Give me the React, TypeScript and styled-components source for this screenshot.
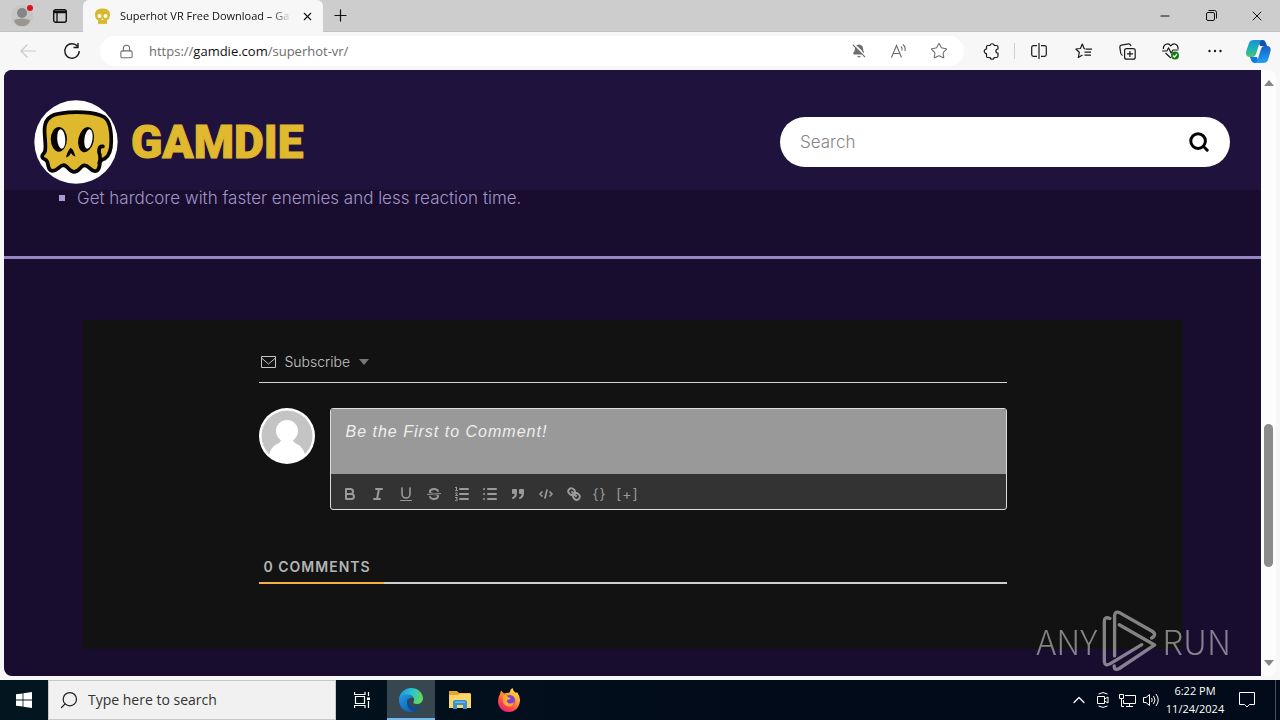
import React from "react";
import styled, { createGlobalStyle } from "styled-components";
import {
  BellOff,
  ChevronUp,
  Lock,
  Minus,
  Plus,
  Search,
  Star,
  X,
} from "lucide-react";

const GlobalStyle = createGlobalStyle`
  * { box-sizing: border-box; }
  body { margin: 0; font-family: "Open Sans", "Noto Sans", sans-serif; }
  button { border: 0; padding: 0; background: none; color: inherit; font: inherit; cursor: pointer; }
  svg { display: block; flex: none; }
`;

const Desktop = styled.div`
  display: flex;
  flex-direction: column;
  min-height: 100vh;
  background: #f7f7f7;
`;

/* ---------- browser chrome ---------- */

const TitleBar = styled.header`
  display: flex;
  height: 32px;
  background: #cdcdcd;
  border-bottom: 1px solid #c2c2c2;
  color: #111;
`;

const TitleLeft = styled.div`
  display: flex;
  align-items: center;
  gap: 20px;
  width: 83px;
  padding-left: 11px;
`;

const ProfileButton = styled.button`
  position: relative;
  width: 22px;
  height: 24px;
`;

const AlertDot = styled.span`
  position: absolute;
  top: 1px;
  right: 0;
  width: 6px;
  height: 6px;
  border-radius: 50%;
  background: #e0101c;
`;

const Tab = styled.div`
  display: flex;
  align-items: center;
  gap: 9px;
  width: 240px;
  height: 32px;
  padding: 0 9px 0 11px;
  border-radius: 6px 6px 0 0;
  background: #f7f7f7;
`;

const TabTitle = styled.span`
  flex: 1;
  font-size: 11px;
  line-height: 16px;
  white-space: nowrap;
  mask-image: linear-gradient(90deg, #000 88%, transparent);
`;

const ChromeButton = styled.button<{ $w?: number }>`
  display: flex;
  align-items: center;
  justify-content: center;
  width: ${(p) => p.$w ?? 34}px;
`;

const WindowControls = styled.div`
  display: flex;
  margin-left: auto;
`;

const NavBar = styled.nav`
  display: flex;
  align-items: center;
  height: 38px;
  padding-left: 6px;
  background: #f7f7f7;
  color: #1a1a1a;
`;

const AddressBar = styled.div`
  display: flex;
  flex: 1;
  align-items: center;
  height: 30px;
  margin: 0 8px 0 6px;
  padding: 0 5px 0 19px;
  border-radius: 15px;
  background: #fff;
  color: #6c6c6c;
`;

const Url = styled.div`
  flex: 1;
  margin-left: 15px;
  font-size: 13px;
  line-height: 20px;
  white-space: nowrap;
  outline: none;
  b { font-weight: 400; color: #111; }
`;

const Divider = styled.span`
  width: 1px;
  height: 16px;
  margin: 0 2px;
  background: #cfcfcf;
`;

/* ---------- page ---------- */

const Viewport = styled.div`
  display: flex;
  flex: 1;
  margin: 0 4px 4px;
  overflow: hidden;
  border-radius: 8px;
  background: #fcfcfc;
`;

const Site = styled.main`
  flex: 1;
  background: #190d2f;
  font-family: Inter, "Open Sans", sans-serif;
`;

const SiteHeader = styled.div`
  display: flex;
  align-items: center;
  justify-content: space-between;
  height: 120px;
  padding: 0 31px 0 30px;
  background: #1f133d;
`;

const Brand = styled.a`
  display: flex;
  align-items: center;
  gap: 13px;
  padding-top: 24px;
  color: #e0b92e;
  font-family: Roboto, sans-serif;
  font-size: 46px;
  font-weight: 900;
  line-height: 84px;
  text-decoration: none;
  -webkit-text-stroke: 1px #e0b92e;
`;

const SearchForm = styled.form`
  display: flex;
  align-items: center;
  width: 450px;
  height: 50px;
  margin-top: 24px;
  padding: 0 20px;
  border-radius: 25px;
  background: #fff;
  color: #000;
`;

const SearchInput = styled.input`
  flex: 1;
  min-width: 0;
  padding: 0;
  border: 0;
  outline: 0;
  background: none;
  font: 300 17px/24px Inter, sans-serif;
  &::placeholder { color: #858585; opacity: 1; }
`;

const Features = styled.ul`
  margin: 0;
  padding: 0 0 50px 55px;
  border-bottom: 3px solid #9487c2;
  list-style: none;
  color: #a196ca;
  font-size: 17px;
  font-weight: 300;
  line-height: 16px;
`;

const Feature = styled.li`
  display: flex;
  align-items: center;
  gap: 12px;
  &::before {
    content: "";
    width: 6px;
    height: 6px;
    background: #a89cd0;
  }
`;

const Comments = styled.section`
  max-width: 1100px;
  margin: 61px auto 27px;
  padding: 30px 0 65px;
  background: #121212;
  color: #c4c4c4;
`;

const CommentsInner = styled.div`
  width: 68%;
  margin: 0 auto;
`;

const SubscribeRow = styled.div`
  display: flex;
  height: 33px;
  padding: 0 2px 9px;
  border-bottom: 1px solid #d5d5d5;
`;

const SubscribeButton = styled.button`
  display: flex;
  align-items: center;
  gap: 9px;
  font-size: 14px;
  font-weight: 300;
  svg:last-child { color: #777; }
`;

const Composer = styled.form`
  display: flex;
  align-items: flex-start;
  gap: 15px;
  margin: 25px 0 47px;
`;

const Editor = styled.div`
  flex: 1;
  overflow: hidden;
  border: 1px solid #dcdcdc;
  border-radius: 3px;
  background: #333;
`;

const CommentBox = styled.textarea`
  display: block;
  width: 100%;
  height: 65px;
  padding: 11px 15px;
  border: 0;
  outline: 0;
  resize: none;
  background: #999;
  font: italic 400 16px/24px "Liberation Sans", Arial, sans-serif;
  letter-spacing: 1px;
  &::placeholder { color: #eee; opacity: 1; }
`;

const Tools = styled.div`
  display: flex;
  align-items: center;
  height: 35px;
  padding: 4px 0 0 5px;
  color: #9a9a9a;
`;

const Tool = styled.button`
  display: flex;
  align-items: center;
  justify-content: center;
  width: 28px;
  height: 24px;
`;

const TextTool = styled(Tool)<{ $w: number }>`
  width: ${(p) => p.$w}px;
  font-size: 14px;
  letter-spacing: 1px;
  line-height: 16px;
`;

const CountRow = styled.div`
  display: flex;
  border-bottom: 2px solid #cfcfcf;
`;

const Count = styled.h2`
  width: 125px;
  margin: 0 0 -2px;
  padding: 0 5px 5px;
  border-bottom: 2px solid #f5b041;
  color: #b5b5b5;
  font-size: 14px;
  font-weight: 600;
  letter-spacing: 1px;
  line-height: 20px;
  white-space: nowrap;
`;

const ScrollTrack = styled.div`
  display: flex;
  flex-direction: column;
  align-items: center;
  width: 15px;
  padding: 10px 0;
  color: #858585;
`;

const Spacer = styled.span<{ $grow: number }>`
  flex: ${(p) => p.$grow} 0 0;
`;

const Thumb = styled.span`
  flex: 143 0 0;
  width: 9px;
  border-radius: 5px;
  background: #8b8b8b;
`;

const Watermark = styled.div`
  position: absolute;
  right: 49px;
  bottom: 48px;
  display: flex;
  align-items: center;
  gap: 5px;
  color: #fff;
  font: 300 34px/62px "Noto Sans CJK SC", sans-serif;
  opacity: 0.48;
  pointer-events: none;
`;

/* ---------- taskbar ---------- */

const Taskbar = styled.footer`
  display: flex;
  height: 40px;
  background: linear-gradient(90deg, #03161f, #020b1a 60%);
  color: #fff;
`;

const TaskButton = styled.button<{ $w?: number; $active?: boolean }>`
  display: flex;
  align-items: center;
  justify-content: center;
  width: ${(p) => p.$w ?? 49}px;
  background: ${(p) => (p.$active ? "#37474f" : "transparent")};
  box-shadow: ${(p) => (p.$active ? "inset 0 -2px #76b9ed" : "none")};
`;

const TaskSearch = styled.label`
  display: flex;
  align-items: center;
  gap: 9px;
  width: 288px;
  padding: 0 10px;
  border: 1px solid #c8c8c8;
  background: #f1f1f1;
  color: #222;
`;

const TaskSearchInput = styled.input`
  flex: 1;
  min-width: 0;
  padding: 0;
  border: 0;
  outline: 0;
  background: none;
  font: 14px/20px "Open Sans", sans-serif;
  &::placeholder { color: #333; opacity: 1; }
`;

const Tray = styled.div`
  display: flex;
  margin-left: auto;
`;

const Clock = styled.time`
  display: flex;
  flex-direction: column;
  align-items: center;
  justify-content: center;
  width: 64px;
  font-size: 11px;
  line-height: 18px;
`;

const ShowDesktop = styled.button`
  width: 5px;
  margin-left: 8px;
  border-left: 1px solid #4a5260;
`;

/* ---------- drawings ---------- */

const BrandSkull = () => (
  <svg width="84" height="84" viewBox="12 12 250 250" aria-hidden="true">
    <circle cx="137" cy="137" r="124" fill="#fff" />
    <g stroke="#080400" strokeWidth="11" strokeLinejoin="round" strokeLinecap="round">
      <path
        fill="#deb92d"
        d="M45 164C49 145 41 112 44 92C47 66 65 55 92 52C132 45 192 47 220 62C238 72 242 108 242 135C242 164 234 180 222 187Q209 190 208 200C207 219 200 227 187 222C177 216 168 202 157 208C148 213 145 226 131 226C118 226 112 207 100 206C87 207 82 224 66 223C53 221 56 207 51 195C48 187 36 188 36 180C36 173 43 172 45 164Z"
      />
      <path fill="none" d="M217 150C205 148 203 162 208 176Q211 188 206 200" />
    </g>
    <ellipse cx="86" cy="129" rx="24" ry="37" fill="#080400" />
    <ellipse cx="93" cy="128" rx="12" ry="29" fill="#fff" transform="rotate(-4 93 128)" />
    <ellipse cx="167" cy="130" rx="23" ry="38" fill="#080400" transform="rotate(12 167 130)" />
    <ellipse cx="174" cy="128" rx="12" ry="29" fill="#fff" transform="rotate(8 174 128)" />
    <path d="M107 183Q112 163 121 154Q131 160 135 181Q126 178 122 170Q115 183 107 183Z" fill="#080400" />
  </svg>
);

const Favicon = () => (
  <svg width="17" height="17" viewBox="0 0 17 17" aria-hidden="true">
    <path fill="#d9b92c" d="M1 6.500C1 2.500 4 .5 8.500 .5S16 2.500 16 6.500C16 10 14.500 12 13 12V15.500Q12 17 11 15.500Q10 17 8.500 15.500Q7 17 6 15.500Q5 17 4 15.500V12C2.500 12 1 10 1 6.500Z" />
    <circle cx="5.500" cy="8" r="2" fill="#fff" />
    <circle cx="11.500" cy="8" r="2" fill="#fff" />
    <path fill="#fff" d="M8.500 10l1 2h-2z" />
  </svg>
);

const Person = () => (
  <svg width="22" height="24" viewBox="0 0 22 24" aria-hidden="true">
    <circle cx="11" cy="12" r="11" fill="#c6c6c6" />
    <circle cx="11" cy="9" r="5" fill="#868686" />
    <path fill="#9b948f" d="M3 16Q11 13 19 16Q18 22 11 22T3 16Z" />
  </svg>
);

const Panel = () => (
  <svg width="14" height="14" viewBox="0 0 14 14" fill="none" stroke="currentColor" aria-hidden="true">
    <rect x=".7" y=".7" width="12.600" height="12.600" rx="2" strokeWidth="1.400" />
    <path d="M1 3h12" strokeWidth="2.500" />
    <path d="M4 3v10" strokeWidth="1.300" />
  </svg>
);

const Back = () => (
  <svg width="18" height="16" viewBox="0 0 18 16" fill="none" stroke="#c9c9c9" strokeWidth="1.200" aria-hidden="true">
    <path d="M17 8H2M8.500 1.500L2 8l6.500 6.500" />
  </svg>
);

const Reload = () => (
  <svg width="18" height="18" viewBox="0 0 18 18" fill="none" stroke="currentColor" strokeWidth="1.400" aria-hidden="true">
    <path d="M16.200 9A7.200 7.200 0 1 1 14.500 4.300M15 1v4.500h-4.500" />
  </svg>
);

const Restore = () => (
  <svg width="11" height="11" viewBox="0 0 11 11" fill="none" stroke="currentColor" aria-hidden="true">
    <rect x=".5" y="2.500" width="8" height="8" rx="1.500" />
    <path d="M2.500 .5H8.500Q10.500 .5 10.500 2.500V8.500" />
  </svg>
);

const ReadAloud = () => (
  <svg width="18" height="16" viewBox="0 0 18 16" fill="none" stroke="currentColor" strokeWidth="1.100" aria-hidden="true">
    <path d="M1.500 14.500L6.500 2.500l5 12M3.200 10.500h6.600M11 3.500q1.500 1.500 1 4M13 1.500q2.800 2.500 2 6.500" />
  </svg>
);

const PuzzleIcon = () => (
  <svg width="18" height="18" viewBox="0 0 18 18" fill="none" stroke="currentColor" strokeWidth="1.200" strokeLinejoin="round" aria-hidden="true">
    <path d="M4.500 3.500H7A2.200 2.200 0 0 1 11.300 3.500H13.500Q15 3.500 15 5V7A2.100 2.100 0 0 0 15 11.200V14Q15 15.500 13.500 15.500H11.300A2.200 2.200 0 0 1 7 15.500H4.500Q3.500 15.500 3.500 14V11.500A2.200 2.200 0 1 1 3.500 7V5Q3.500 3.500 4.500 3.500Z" />
  </svg>
);

const Split = () => (
  <svg width="16" height="16" viewBox="0 0 16 16" fill="none" stroke="currentColor" strokeWidth="1.200" aria-hidden="true">
    <path d="M6 2.600H2.500Q.7 2.600.7 4.400V11.600Q.7 13.400 2.500 13.400H6M10 2.600H13.500Q15.300 2.600 15.300 4.400V11.600Q15.300 13.400 13.500 13.400H10M8 0V16" />
  </svg>
);

const Favorites = () => (
  <svg width="17" height="16" viewBox="0 0 17 16" fill="none" stroke="currentColor" strokeWidth="1.200" strokeLinejoin="round" aria-hidden="true">
    <path d="M10.500 6L9.200 5.700L7.300 1L5.400 5.500L.8 6L4.300 9.300L3.300 14.500L7.500 12M11 6.200H17M9.500 9.200H16M9.500 12.200H16" />
  </svg>
);

const Collections = () => (
  <svg width="17" height="17" viewBox="0 0 17 17" fill="none" stroke="currentColor" strokeWidth="1.200" aria-hidden="true">
    <rect x="5.600" y="5.600" width="10.600" height="10.600" rx="2" />
    <path d="M10.900 8v6M8 10.900h6M3.500 12.500Q2 11.500 1.700 10L.8 4.200Q.8 2.500 2.400 2.200L9.500 .9Q11.500 .8 12 3.200" />
  </svg>
);

const Health = () => (
  <svg width="18" height="17" viewBox="0 0 18 17" fill="none" stroke="currentColor" strokeWidth="1.200" strokeLinejoin="round" aria-hidden="true">
    <path d="M1.500 6C.8 1 6.500-.8 8.800 3C11.500-.8 16.500 1 16 6M3.500 10L8.800 15M0 8H4.800L6.600 4.800L9 10L11 7H16.500" />
    <circle cx="13" cy="12.500" r="4" fill="#107c10" stroke="none" />
    <path d="M11 12.500l1.500 1.500 2.500-3" stroke="#fff" />
  </svg>
);

const Dots = () => (
  <svg width="14" height="4" viewBox="0 0 14 4" fill="currentColor" aria-hidden="true">
    <circle cx="1.500" cy="2" r="1.200" />
    <circle cx="7" cy="2" r="1.200" />
    <circle cx="12.500" cy="2" r="1.200" />
  </svg>
);

const Copilot = () => (
  <svg width="25" height="23" viewBox="0 0 25 23" aria-hidden="true">
    <defs>
      <linearGradient id="cpA" x1="0" y1="0" x2="0" y2="1">
        <stop offset="0" stopColor="#1b90d8" />
        <stop offset=".55" stopColor="#18b5b2" />
        <stop offset="1" stopColor="#58bf6a" />
      </linearGradient>
      <linearGradient id="cpB" x1="0" y1="0" x2="0" y2="1">
        <stop offset="0" stopColor="#1560c4" />
        <stop offset="1" stopColor="#25a0f5" />
      </linearGradient>
    </defs>
    <path fill="#1251ad" d="M12 0H17Q19 0 20 3L21 6H14Z" />
    <path fill="#0f7be0" d="M4 17H11L13 23H9Q6 23 5 20Z" />
    <path fill="url(#cpA)" d="M8 0H16Q14 1 13.500 3L10 14Q9 17 6 17H3Q-1 16 .3 11L3 3Q4 0 8 0Z" />
    <path fill="url(#cpB)" d="M18 6H21Q25.500 6.500 24.500 11L22 20Q21 23 17 23H9Q11 22 11.500 20L15 9Q16 6 18 6Z" />
  </svg>
);

const Triangle = ({ w, up }: { w: number; up?: boolean }) => (
  <svg width={w} height="6" viewBox="0 0 10 6" fill="currentColor" aria-hidden="true">
    <path d={up ? "M0 6L5 0L10 6Z" : "M0 0H10L5 6Z"} />
  </svg>
);

const Envelope = () => (
  <svg width="15" height="12" viewBox="0 0 15 12" fill="none" stroke="currentColor" aria-hidden="true">
    <path d="M.5 .5h14v11H.5zM.5 2l7 6 7-6" />
  </svg>
);

const Avatar = () => (
  <svg width="56" height="56" viewBox="0 0 56 56" aria-hidden="true">
    <defs>
      <clipPath id="avatarClip"><circle cx="28" cy="28" r="26" /></clipPath>
    </defs>
    <circle cx="28" cy="28" r="28" fill="#fff" />
    <circle cx="28" cy="28" r="25.500" fill="#c4c4c4" />
    <g fill="#fff" clipPath="url(#avatarClip)">
      <circle cx="28" cy="23" r="11" />
      <path d="M22 30H34Q33 34 38 36Q46 39 48 56H8Q10 39 18 36Q23 34 22 30Z" />
    </g>
  </svg>
);

const PlayMark = () => (
  <svg width="55" height="62" viewBox="238 14 166 186" fill="none" stroke="currentColor" strokeWidth="10" strokeLinecap="round" strokeLinejoin="round" aria-hidden="true">
    <path d="M262 39Q245 32 245 48V170Q247 184 262 176L358 118" />
    <path d="M276 152V30Q278 15 292 22L392 79Q403 90 388 98" />
    <path d="M290 58L397 119L290 190Q274 198 275 182" />
  </svg>
);

const Thin = ({ children }: { children: React.ReactNode }) => (
  <svg width="18" height="18" viewBox="0 0 18 18" fill="none" stroke="currentColor" strokeWidth="2" strokeLinecap="round" strokeLinejoin="round" aria-hidden="true">
    {children}
  </svg>
);

const editorTools: { label: string; art: React.ReactNode }[] = [
  {
    label: "Bold",
    art: <path d="M5 4H9.500A2.500 2.500 0 0 1 9.500 9H5ZM5 9H10.500A2.500 2.500 0 0 1 10.500 14H5Z" />,
  },
  { label: "Italic", art: <path d="M7 4h6M5 14h6M8 14l2-10" /> },
  {
    label: "Underline",
    art: (
      <>
        <path d="M5 3V9a4 4 0 0 0 8 0V3" strokeWidth="1.600" />
        <path d="M3.500 15.500h11" strokeWidth="1" />
      </>
    ),
  },
  {
    label: "Strike",
    art: (
      <>
        <path d="M15.500 8.500L2.500 9.500" strokeWidth="1" />
        <path
          fill="currentColor"
          stroke="none"
          d="M9.007 8C6.542 7.791 6 7.519 6 6.500 6 5.792 7.283 5 9 5c1.571 0 2.765.679 2.969 1.309a1 1 0 0 0 1.900-.617C13.356 4.106 11.354 3 9 3 6.200 3 4 4.538 4 6.500a3.200 3.200 0 0 0 .5 1.843ZM8.984 10C11.457 10.208 12 10.479 12 11.500c0 .708-1.283 1.500-3 1.500-1.571 0-2.765-.679-2.969-1.309a1 1 0 1 0-1.900.617C4.644 13.894 6.646 15 9 15c2.800 0 5-1.538 5-3.500a3.200 3.200 0 0 0-.5-1.843Z"
        />
      </>
    ),
  },
  {
    label: "Ordered list",
    art: (
      <>
        <path d="M7 4h8M7 9h8M7 14h8" />
        <path strokeWidth="1" d="M2.500 2.500l1-.5v3.500M2.500 5.500h2M2.500 8q2-1 1.800.6L2.500 10.500h2M2.500 12.500h1.800L3.300 14q1.400 0 1 1.300-.6.600-1.800.2" />
      </>
    ),
  },
  { label: "Bullet list", art: <path d="M7 4h8M7 9h8M7 14h8M3 4h.01M3 9h.01M3 14h.01" /> },
  {
    label: "Quote",
    art: (
      <path
        fill="currentColor"
        d="M4 5h3v3H4zM11 5h3v3h-3zM7 8c0 4-3 5-3 5M14 8c0 4-3 5-3 5"
      />
    ),
  },
  { label: "Code block", art: <path strokeWidth="1.700" d="M5 7L3 9l2 2M13 7l2 2-2 2M10 5L8 13" /> },
  {
    label: "Link",
    art: (
      <path d="M7 7l4 4M8.900 4.577a3.476 3.476 0 0 1 .36 4.679A3.476 3.476 0 0 1 4.577 8.900C3.185 7.500 2.035 6.400 4.217 4.217S7.500 3.185 8.900 4.577ZM13.423 9.100a3.476 3.476 0 0 0-4.679-.36 3.476 3.476 0 0 0 .36 4.679c1.392 1.392 2.500 2.542 4.679.36S14.815 10.500 13.423 9.100Z" />
    ),
  },
];

const WindowsLogo = () => (
  <svg width="16" height="16" viewBox="0 0 16 16" fill="#fff" aria-hidden="true">
    <path d="M0 2.300L6.600 1.400V7.600H0zM7.400 1.300L16 0V7.600H7.400zM0 8.400H6.600V14.600L0 13.700zM7.400 8.400H16V16L7.400 14.700z" />
  </svg>
);

const TaskView = () => (
  <svg width="16" height="16" viewBox="0 0 16 16" fill="none" stroke="#fff" strokeWidth="1.200" aria-hidden="true">
    <path d="M.5 0V2.500H11V0M.5 16V13.500H11V16M1.500 4.500H10.500V11.500H1.500zM14.500 0V4M14.500 9V16" />
    <path d="M13 5.500h3v2.500h-3z" fill="#fff" stroke="none" />
  </svg>
);

const EdgeLogo = () => (
  <svg width="24" height="24" viewBox="0 0 24 24" aria-hidden="true">
    <defs>
      <linearGradient id="edTop" x1="0" y1=".2" x2="1" y2=".5">
        <stop offset="0" stopColor="#1b8fe0" />
        <stop offset=".5" stopColor="#2cc3d2" />
        <stop offset="1" stopColor="#62d85a" />
      </linearGradient>
      <linearGradient id="edLow" x1="0" y1="0" x2="1" y2="1">
        <stop offset="0" stopColor="#1f9be6" />
        <stop offset="1" stopColor="#0d4f9e" />
      </linearGradient>
    </defs>
    <path fill="url(#edTop)" d="M0 11C1 4 6 0 12 0C19 0 24 5 24 10.500C24 14 21 16 18 16C15 16 14 15 14.500 14C16 12 15 7 9.500 7C5 7 1 9 0 12Z" />
    <path fill="url(#edLow)" d="M0 12C1 7 5 6.500 8.500 6.500C12 6.500 14 8.500 14 10C10 9 8.500 12 9 14.500C10 19 16 20.500 21.500 17.500C19 22 16 24 12 24C5 24 0 19 0 12Z" />
    <path fill="#114a8b" d="M9.500 10C7 12 7 22 15 23.500C18 23 20 20.500 21.500 17.500C15 21 8 17 9.500 10Z" />
  </svg>
);

const FolderLogo = () => (
  <svg width="22" height="18" viewBox="0 0 22 18" aria-hidden="true">
    <path fill="#e6a52c" d="M0 0H8L10 2H21V6H0z" />
    <path fill="#fcd667" d="M0 4H9L11 2.500H22V17H0z" />
    <path fill="#3a8fd0" d="M4 18V11Q4 9 6 9H16Q18 9 18 11V18H14V14H8V18z" />
    <path fill="#69b8ea" d="M6 10.500h10v1.500H6z" />
  </svg>
);

const FirefoxLogo = () => (
  <svg width="24" height="24" viewBox="0 0 24 24" aria-hidden="true">
    <defs>
      <linearGradient id="ffBody" x1=".8" y1="0" x2=".2" y2="1">
        <stop offset="0" stopColor="#fff04a" />
        <stop offset=".4" stopColor="#ff9a2a" />
        <stop offset=".75" stopColor="#fb3d50" />
        <stop offset="1" stopColor="#e0208a" />
      </linearGradient>
    </defs>
    <path fill="url(#ffBody)" d="M3 6L4 2.500L7 5.500L9.500 5Q12 5 13 4Q13 1 15.500 0Q16 3 19 5L20 4Q23.500 9 23 13C22 20 18 24 12 24C5 24 1 19 1 13Q1 9 3 6Z" />
    <circle cx="12.500" cy="12.500" r="5.500" fill="#7a42d8" />
    <path fill="#ffab30" d="M6 8Q9 6 11.500 9.500L14 10Q12 12 10 12Q9 14 12 15.500Q15 16 17 14Q16 18.500 12 18.500Q6 18 6 12Z" />
  </svg>
);

const MeetNow = () => (
  <svg width="12" height="16" viewBox="0 0 12 16" fill="none" stroke="currentColor" aria-hidden="true">
    <path d="M1.500 2Q6-.8 10.500 2M1.500 14Q6 16.800 10.500 14M.5 4.500H7.500V11.500H.5zM7.500 7L11 5V11L7.500 9" />
  </svg>
);

const Network = () => (
  <svg width="17" height="15" viewBox="0 0 17 15" fill="none" stroke="currentColor" aria-hidden="true">
    <path d="M6 2.500H16.500V10.500H4.500V7M.5 1.500H4.500V5.500H.5zM2.500 5.500V13.500H5M10.500 10.500V13.500M7 13.500H14" />
  </svg>
);

const Sound = () => (
  <svg width="17" height="14" viewBox="0 0 17 14" fill="none" stroke="currentColor" aria-hidden="true">
    <path d="M.5 4.500H3L6.500 1.500V12.500L3 9.500H.5zM8.500 5Q10 7 8.500 9M10.500 3Q13.500 7 10.500 11M13 1Q17.500 7 13 13" />
  </svg>
);

const Notice = () => (
  <svg width="16" height="16" viewBox="0 0 16 16" fill="none" stroke="currentColor" aria-hidden="true">
    <path d="M.5 .5H15.500V12.500H10.500L8 15L5.500 12.500H.5Z" />
  </svg>
);

/* ---------- screen ---------- */

export default function App() {
  return (
    <Desktop>
      <GlobalStyle />
      <TitleBar>
        <TitleLeft>
          <ProfileButton aria-label="Profile">
            <Person />
            <AlertDot />
          </ProfileButton>
          <button aria-label="Tab actions"><Panel /></button>
        </TitleLeft>
        <Tab>
          <Favicon />
          <TabTitle>Superhot VR Free Download – Ga</TabTitle>
          <button aria-label="Close tab"><X size={13} strokeWidth={2} /></button>
        </Tab>
        <ChromeButton aria-label="New tab"><Plus size={19} strokeWidth={1.500} /></ChromeButton>
        <WindowControls>
          <ChromeButton $w={46} aria-label="Minimize"><Minus size={14} strokeWidth={1.800} /></ChromeButton>
          <ChromeButton $w={46} aria-label="Restore"><Restore /></ChromeButton>
          <ChromeButton $w={46} aria-label="Close"><X size={16} strokeWidth={1.500} /></ChromeButton>
        </WindowControls>
      </TitleBar>

      <NavBar>
        <ChromeButton $w={44} aria-label="Back"><Back /></ChromeButton>
        <ChromeButton $w={44} aria-label="Reload"><Reload /></ChromeButton>
        <AddressBar>
          <Lock size={15} strokeWidth={1.700} />
          <Url role="textbox" aria-label="Address" tabIndex={0}>
            https://<b>gamdie.com</b>/superhot-vr/
          </Url>
          <ChromeButton $w={40} aria-label="Notifications blocked"><BellOff size={14} fill="currentColor" /></ChromeButton>
          <ChromeButton $w={40} aria-label="Read aloud"><ReadAloud /></ChromeButton>
          <ChromeButton $w={40} aria-label="Add to favorites"><Star size={18} strokeWidth={1.400} /></ChromeButton>
        </AddressBar>
        <ChromeButton $w={40} aria-label="Extensions"><PuzzleIcon /></ChromeButton>
        <Divider />
        <ChromeButton $w={44} aria-label="Split screen"><Split /></ChromeButton>
        <ChromeButton $w={44} aria-label="Favorites"><Favorites /></ChromeButton>
        <ChromeButton $w={44} aria-label="Collections"><Collections /></ChromeButton>
        <ChromeButton $w={44} aria-label="Browser essentials"><Health /></ChromeButton>
        <ChromeButton $w={44} aria-label="Settings and more"><Dots /></ChromeButton>
        <ChromeButton $w={43} aria-label="Copilot"><Copilot /></ChromeButton>
      </NavBar>

      <Viewport>
        <Site>
          <SiteHeader>
            <Brand href="#"><BrandSkull />GAMDIE</Brand>
            <SearchForm role="search">
              <SearchInput type="text" placeholder="Search" aria-label="Search" />
              <button type="button" aria-label="Submit search"><Search size={22} strokeWidth={3.200} /></button>
            </SearchForm>
          </SiteHeader>
          <Features>
            <Feature>Get hardcore with faster enemies and less reaction time.</Feature>
          </Features>
          <Comments>
            <CommentsInner>
              <SubscribeRow>
                <SubscribeButton>
                  <Envelope />
                  Subscribe
                  <Triangle w={10} />
                </SubscribeButton>
              </SubscribeRow>
              <Composer>
                <Avatar />
                <Editor>
                  <CommentBox placeholder="Be the First to Comment!" aria-label="Comment" />
                  <Tools>
                    {editorTools.map((t) => (
                      <Tool key={t.label} type="button" aria-label={t.label}>
                        <Thin>{t.art}</Thin>
                      </Tool>
                    ))}
                    <TextTool $w={24} type="button">{"{}"}</TextTool>
                    <TextTool $w={32} type="button">[+]</TextTool>
                  </Tools>
                </Editor>
              </Composer>
              <CountRow>
                <Count>0 COMMENTS</Count>
              </CountRow>
            </CommentsInner>
          </Comments>
        </Site>
        <ScrollTrack aria-hidden="true">
          <Triangle w={10} up />
          <Spacer $grow={338} />
          <Thumb />
          <Spacer $grow={93} />
          <Triangle w={10} />
        </ScrollTrack>
      </Viewport>

      <Watermark>
        <span>ANY</span>
        <PlayMark />
        <span>RUN</span>
      </Watermark>

      <Taskbar>
        <TaskButton $w={48} aria-label="Start"><WindowsLogo /></TaskButton>
        <TaskSearch>
          <Search size={20} strokeWidth={1.500} transform="scale(-1 1)" />
          <TaskSearchInput type="text" placeholder="Type here to search" aria-label="Type here to search" />
        </TaskSearch>
        <TaskButton $w={51} aria-label="Task view"><TaskView /></TaskButton>
        <TaskButton $w={48} $active aria-label="Microsoft Edge"><EdgeLogo /></TaskButton>
        <TaskButton aria-label="File Explorer"><FolderLogo /></TaskButton>
        <TaskButton aria-label="Firefox"><FirefoxLogo /></TaskButton>
        <Tray>
          <TaskButton $w={24} aria-label="Hidden icons"><ChevronUp size={20} strokeWidth={1.500} /></TaskButton>
          <TaskButton $w={24} aria-label="Meet now"><MeetNow /></TaskButton>
          <TaskButton $w={24} aria-label="Network"><Network /></TaskButton>
          <TaskButton $w={24} aria-label="Volume"><Sound /></TaskButton>
          <Clock>
            <span>6:22 PM</span>
            <span>11/24/2024</span>
          </Clock>
          <TaskButton $w={40} aria-label="Action center"><Notice /></TaskButton>
          <ShowDesktop aria-label="Show desktop" />
        </Tray>
      </Taskbar>
    </Desktop>
  );
}
